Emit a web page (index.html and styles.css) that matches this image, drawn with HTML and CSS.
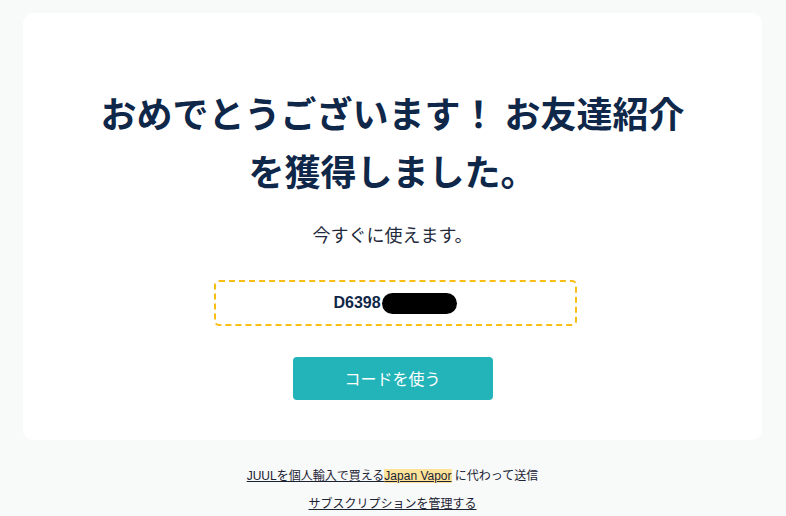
FILE: index.html
```html
<!DOCTYPE html>
<html lang="ja">
<head>
  <meta charset="UTF-8">
  <meta name="viewport" content="width=device-width, initial-scale=1.0">
  <title>お友達紹介</title>
  <link rel="stylesheet" href="styles.css">
</head>
<body>

  <div class="card">
    <h1>おめでとうございます！ お友達紹介を獲得しました。</h1>
    <p class="lead">今すぐに使えます。</p>

    <!-- Referral code -->
    <div class="code-box">
      <span class="code">D6398</span><span class="redact"></span>
    </div>

    <a class="use-btn" href="#">コードを使う</a>
  </div>

  <div class="footer">
    <p><a href="#">JUULを個人輸入で買える<span class="mark">Japan Vapor</span></a> に代わって送信</p>
    <p><a href="#">サブスクリプションを管理する</a></p>
  </div>

</body>
</html>
```

FILE: styles.css
```css
body {
  font-family: "Liberation Sans", "Noto Sans CJK JP", sans-serif;
  margin: 0;
  padding: 13px 24px 0 23px;
  background-color: #f8f9f9;
  color: #1b2233;
}

.card {
  background-color: #fff;
  border-radius: 10px;
  padding: 70px 70px 40px;
  height: 317px;
  display: flex;
  flex-direction: column;
  align-items: center;
  text-align: center;
}

h1 {
  margin: 0;
  font-family: "Noto Sans CJK JP", sans-serif;
  font-size: 36px;
  font-weight: 700;
  line-height: 58px;
  color: #0f2748;
}

.lead {
  margin: 23px 0 0;
  font-family: "Noto Sans CJK JP", sans-serif;
  font-size: 18px;
  line-height: 24px;
  color: #1f2a3c;
}

.code-box {
  margin: 34px 0 0 5px;
  width: 359px;
  height: 42px;
  border: 2px dashed #f8be14;
  border-radius: 5px;
  display: flex;
  align-items: center;
  justify-content: center;
}

.code {
  font-size: 16px;
  font-weight: 700;
  color: #0f2748;
}

.redact {
  display: inline-block;
  width: 75px;
  height: 21px;
  margin-left: 1px;
  background-color: #000;
  border-radius: 11px;
}

.use-btn {
  margin-top: 31px;
  width: 200px;
  height: 43px;
  line-height: 43px;
  background-color: #22b4b9;
  color: #fff;
  border-radius: 4px;
  text-decoration: none;
  font-family: "Noto Sans CJK JP", sans-serif;
  font-size: 16px;
}

.footer {
  margin-top: 22px;
  text-align: center;
  font-size: 12px;
  line-height: 28px;
}

.footer p {
  margin: 0;
}

.footer a {
  color: #1b2233;
}

.mark {
  background-color: #fde39a;
}
```
